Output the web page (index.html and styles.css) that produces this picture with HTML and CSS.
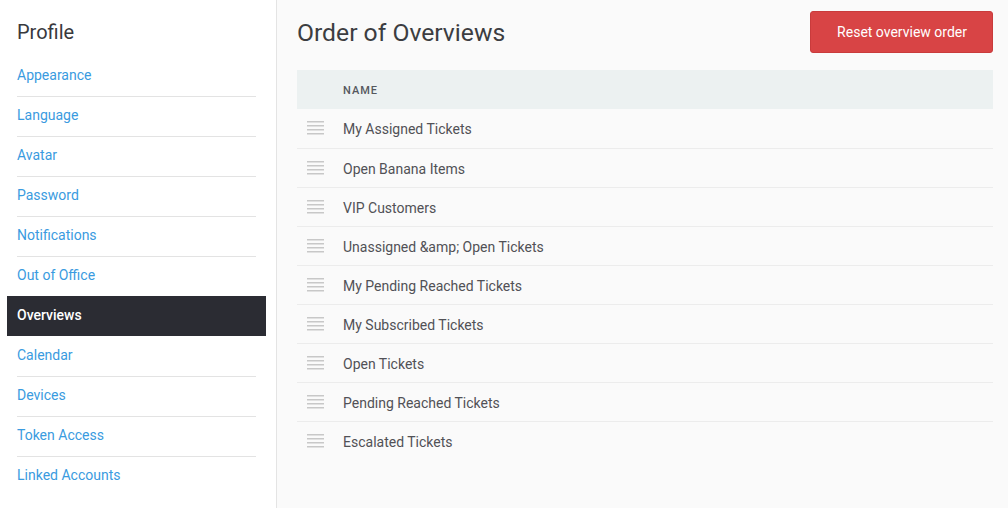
FILE: index.html
```html
<!DOCTYPE html>
<html>
<head>
<meta charset="utf-8">
<link rel="stylesheet" href="styles.css">
</head>
<body>
<aside class="sidebar">
  <h2 class="sidebar-title">Profile</h2>
  <nav class="nav">
    <a class="nav-item first"><span class="nav-label">Appearance</span></a>
    <a class="nav-item"><span class="nav-label">Language</span></a>
    <a class="nav-item"><span class="nav-label">Avatar</span></a>
    <a class="nav-item"><span class="nav-label">Password</span></a>
    <a class="nav-item"><span class="nav-label">Notifications</span></a>
    <a class="nav-item"><span class="nav-label">Out of Office</span></a>
    <a class="nav-item active"><span class="nav-label">Overviews</span></a>
    <a class="nav-item no-sep"><span class="nav-label">Calendar</span></a>
    <a class="nav-item"><span class="nav-label">Devices</span></a>
    <a class="nav-item"><span class="nav-label">Token Access</span></a>
    <a class="nav-item"><span class="nav-label">Linked Accounts</span></a>
  </nav>
</aside>
<main class="main">
  <div class="page-header">
    <h1 class="page-title">Order of Overviews</h1>
    <button class="btn-danger">Reset overview order</button>
  </div>
  <table class="table">
    <thead>
      <tr><th class="col-handle"></th><th class="col-name">Name</th></tr>
    </thead>
    <tbody>
      <tr><td class="col-handle"><svg class="handle" width="17" height="14" viewBox="0 0 17 14"><path d="M0 0.75H17M0 4.75H17M0 8.75H17M0 12.75H17" stroke="#c8c8c8" stroke-width="1.3"/></svg></td><td class="col-name">My Assigned Tickets</td></tr>
      <tr><td class="col-handle"><svg class="handle" width="17" height="14" viewBox="0 0 17 14"><path d="M0 0.75H17M0 4.75H17M0 8.75H17M0 12.75H17" stroke="#c8c8c8" stroke-width="1.3"/></svg></td><td class="col-name">Open Banana Items</td></tr>
      <tr><td class="col-handle"><svg class="handle" width="17" height="14" viewBox="0 0 17 14"><path d="M0 0.75H17M0 4.75H17M0 8.75H17M0 12.75H17" stroke="#c8c8c8" stroke-width="1.3"/></svg></td><td class="col-name">VIP Customers</td></tr>
      <tr><td class="col-handle"><svg class="handle" width="17" height="14" viewBox="0 0 17 14"><path d="M0 0.75H17M0 4.75H17M0 8.75H17M0 12.75H17" stroke="#c8c8c8" stroke-width="1.3"/></svg></td><td class="col-name">Unassigned &amp;amp; Open Tickets</td></tr>
      <tr><td class="col-handle"><svg class="handle" width="17" height="14" viewBox="0 0 17 14"><path d="M0 0.75H17M0 4.75H17M0 8.75H17M0 12.75H17" stroke="#c8c8c8" stroke-width="1.3"/></svg></td><td class="col-name">My Pending Reached Tickets</td></tr>
      <tr><td class="col-handle"><svg class="handle" width="17" height="14" viewBox="0 0 17 14"><path d="M0 0.75H17M0 4.75H17M0 8.75H17M0 12.75H17" stroke="#c8c8c8" stroke-width="1.3"/></svg></td><td class="col-name">My Subscribed Tickets</td></tr>
      <tr><td class="col-handle"><svg class="handle" width="17" height="14" viewBox="0 0 17 14"><path d="M0 0.75H17M0 4.75H17M0 8.75H17M0 12.75H17" stroke="#c8c8c8" stroke-width="1.3"/></svg></td><td class="col-name">Open Tickets</td></tr>
      <tr><td class="col-handle"><svg class="handle" width="17" height="14" viewBox="0 0 17 14"><path d="M0 0.75H17M0 4.75H17M0 8.75H17M0 12.75H17" stroke="#c8c8c8" stroke-width="1.3"/></svg></td><td class="col-name">Pending Reached Tickets</td></tr>
      <tr><td class="col-handle"><svg class="handle" width="17" height="14" viewBox="0 0 17 14"><path d="M0 0.75H17M0 4.75H17M0 8.75H17M0 12.75H17" stroke="#c8c8c8" stroke-width="1.3"/></svg></td><td class="col-name">Escalated Tickets</td></tr>
    </tbody>
  </table>
</main>
</body>
</html>
```

FILE: styles.css
```css
* { box-sizing: border-box; }
html, body { height: 100%; }
body {
  margin: 0;
  display: flex;
  font-family: Roboto, "Noto Sans", sans-serif;
  background: #fafafa;
  color: #4a4a4d;
  overflow: hidden;
}
.sidebar {
  width: 277px;
  flex: none;
  background: #fff;
  border-right: 1px solid #e4e4e4;
  padding: 18px 10px 0 7px;
}
.sidebar-title {
  margin: 0 0 10px 10px;
  font-size: 20px;
  line-height: 28px;
  font-weight: 400;
  color: #38393d;
}
.nav { display: flex; flex-direction: column; }
.nav-item {
  display: block;
  padding: 0 10px;
  height: 40px;
  font-size: 14px;
  color: #3a9be0;
}
.nav-label {
  display: block;
  height: 40px;
  line-height: 37px;
  border-top: 1px solid #e3e3e3;
}
.nav-item.first .nav-label,
.nav-item.no-sep .nav-label,
.nav-item.active .nav-label { border-top-color: transparent; }
.nav-item.active {
  background: #2b2c33;
  color: #fff;
  font-weight: 500;
}
.main {
  flex: 1;
  padding: 11px 15px 0 20px;
}
.page-header {
  display: flex;
  align-items: center;
  justify-content: space-between;
  height: 41px;
  margin-bottom: 18px;
}
.page-title {
  margin: 0;
  font-size: 24.7px;
  font-weight: 400;
  color: #3c3d41;
  padding-top: 2px;
}
.btn-danger {
  height: 42px;
  padding: 0 25px 0 26px;
  background: #d84445;
  border: 1px solid #c93b3c;
  border-radius: 3px;
  color: #fff;
  font-family: inherit;
  font-size: 14px;
}
.table {
  width: 100%;
  border-collapse: collapse;
}
.table th {
  height: 39px;
  padding-top: 2px;
  background: #ecf1f1;
  text-align: left;
  font-size: 11px;
  font-weight: 500;
  letter-spacing: 1px;
  text-transform: uppercase;
  color: #55585e;
}
.table td {
  height: 39px;
  padding-top: 3px;
  font-size: 14px;
  color: #515156;
  border-bottom: 1px solid #ececec;
}
.table td.col-handle { padding-top: 0; }
.table tbody tr:last-child td { border-bottom: none; }
.col-handle { width: 45px; padding: 0 0 0 10px; }
.col-name { padding-left: 1px; }
.handle { display: block; }
```
